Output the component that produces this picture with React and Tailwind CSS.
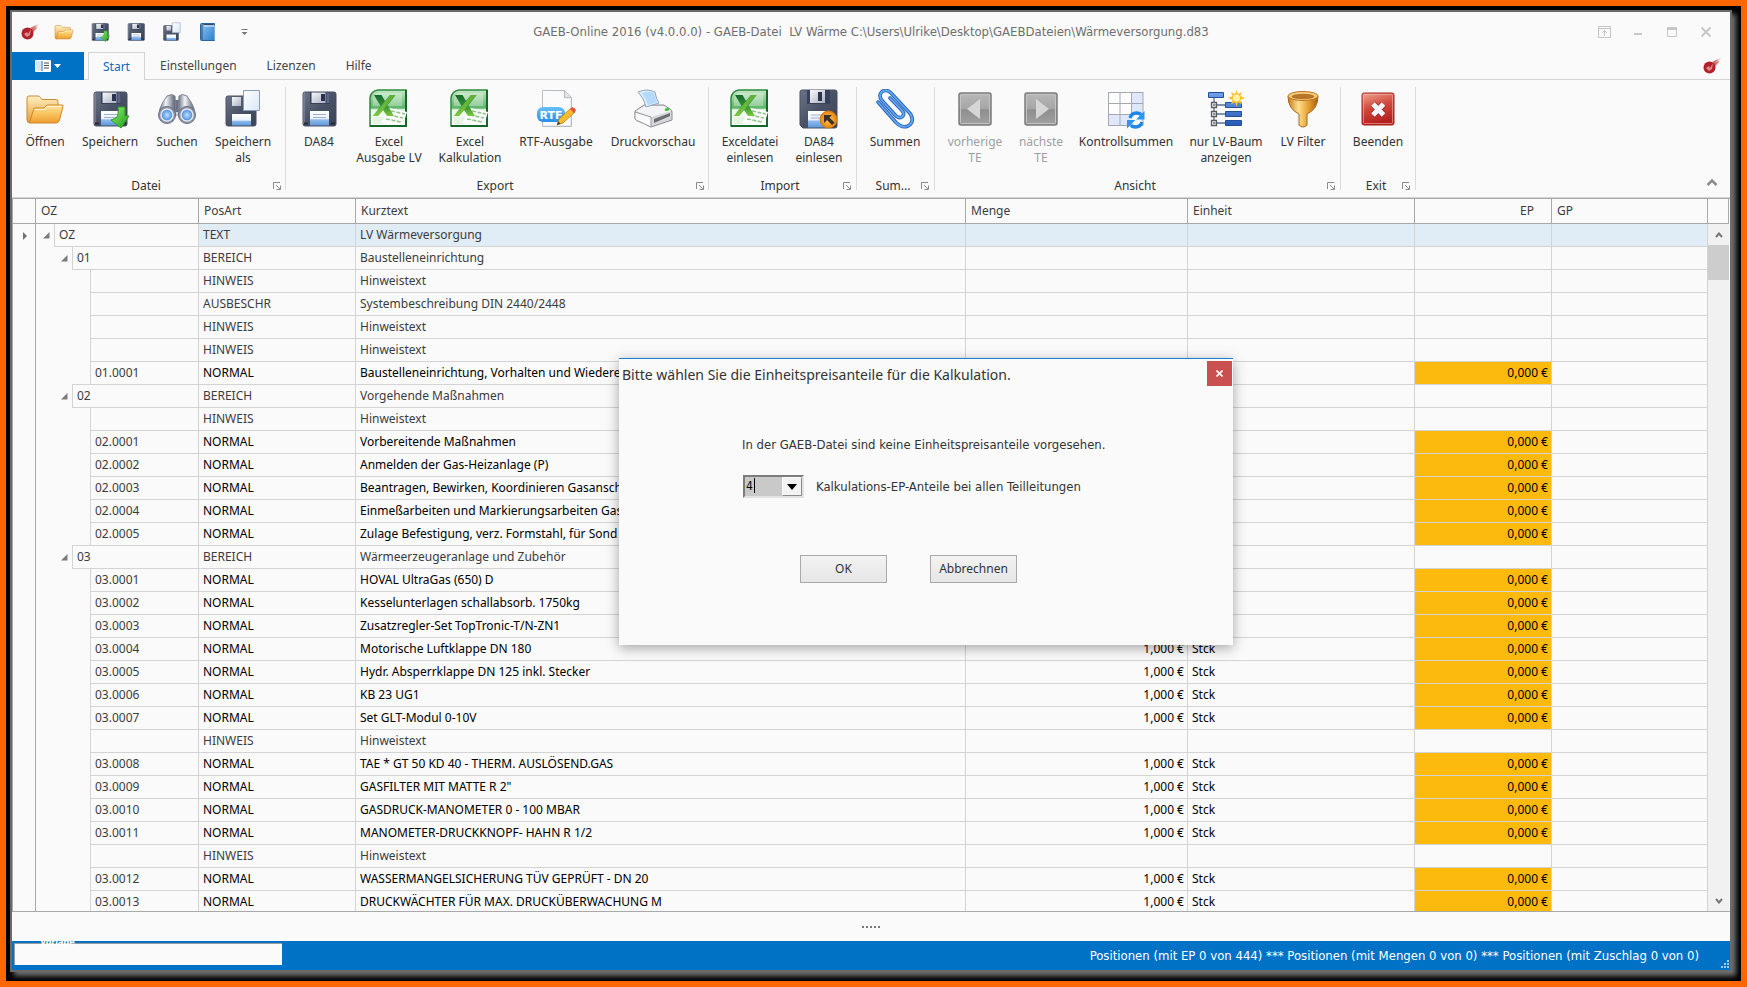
import React from "react";

const Defs = () => (
  <svg width="0" height="0" className="absolute" aria-hidden="true">
    <defs>
      <linearGradient id="gBody" x1="0" y1="0" x2="1" y2="1"><stop offset="0" stopColor="#6b7488" /><stop offset="0.5" stopColor="#4a5266" /><stop offset="1" stopColor="#3a4256" /></linearGradient>
      <linearGradient id="gLabel" x1="0" y1="0" x2="0" y2="1"><stop offset="0" stopColor="#ffffff" /><stop offset="0.55" stopColor="#e8f1fc" /><stop offset="0.6" stopColor="#8fbcec" /><stop offset="1" stopColor="#5f98dc" /></linearGradient>
      <linearGradient id="gMetal" x1="0" y1="0" x2="1" y2="1"><stop offset="0" stopColor="#f8f9fb" /><stop offset="1" stopColor="#a9b0bf" /></linearGradient>
      <linearGradient id="gFolder" x1="0" y1="0" x2="0" y2="1"><stop offset="0" stopColor="#fff0c0" /><stop offset="1" stopColor="#e39c34" /></linearGradient>
      <linearGradient id="gFolder2" x1="0" y1="0" x2="0" y2="1"><stop offset="0" stopColor="#ffe7a4" /><stop offset="0.5" stopColor="#f9c35d" /><stop offset="1" stopColor="#ee9c31" /></linearGradient>
      <linearGradient id="gGreen" x1="0" y1="0" x2="1" y2="1"><stop offset="0" stopColor="#8ff06a" /><stop offset="1" stopColor="#1f9a1c" /></linearGradient>
      <linearGradient id="gExcel" x1="0" y1="0" x2="0" y2="1"><stop offset="0" stopColor="#c4e8c4" /><stop offset="0.5" stopColor="#5cb468" /><stop offset="0.55" stopColor="#e9f6e9" /><stop offset="1" stopColor="#ffffff" /></linearGradient>
      <linearGradient id="gX" x1="0" y1="0" x2="0" y2="1"><stop offset="0" stopColor="#17692c" /><stop offset="0.5" stopColor="#2f8f35" /><stop offset="1" stopColor="#7cc63c" /></linearGradient>
      <linearGradient id="gPage" x1="0" y1="0" x2="1" y2="1"><stop offset="0" stopColor="#ffffff" /><stop offset="1" stopColor="#d9e7f7" /></linearGradient>
      <linearGradient id="gRed" x1="0" y1="0" x2="0.3" y2="1"><stop offset="0" stopColor="#f0a593" /><stop offset="0.5" stopColor="#d04a3c" /><stop offset="1" stopColor="#b3211f" /></linearGradient>
      <linearGradient id="gGray" x1="0" y1="0" x2="0" y2="1"><stop offset="0" stopColor="#b8b8b8" /><stop offset="0.5" stopColor="#a6a6a6" /><stop offset="0.52" stopColor="#8e8e8e" /><stop offset="1" stopColor="#a2a2a2" /></linearGradient>
      <linearGradient id="gBlue" x1="0" y1="0" x2="0" y2="1"><stop offset="0" stopColor="#6ea1e6" /><stop offset="1" stopColor="#2658b4" /></linearGradient>
      <linearGradient id="gGold" x1="0" y1="0" x2="1" y2="0"><stop offset="0" stopColor="#c87a1b" /><stop offset="0.35" stopColor="#ffdf8c" /><stop offset="0.7" stopColor="#e39a2c" /><stop offset="1" stopColor="#a85f12" /></linearGradient>
      <linearGradient id="gTube" x1="0" y1="0" x2="1" y2="0"><stop offset="0" stopColor="#5e6678" /><stop offset="0.4" stopColor="#f2f4f7" /><stop offset="1" stopColor="#4c5466" /></linearGradient>
      <radialGradient id="gLens"><stop offset="0" stopColor="#bfe0ff" /><stop offset="1" stopColor="#4186dc" /></radialGradient>
      <radialGradient id="gOrange"><stop offset="0" stopColor="#ffc95e" /><stop offset="1" stopColor="#e88308" /></radialGradient>
      <linearGradient id="gBook" x1="0" y1="0" x2="1" y2="1"><stop offset="0" stopColor="#8cc6f4" /><stop offset="1" stopColor="#2b7ed0" /></linearGradient>
      <linearGradient id="gRtf" x1="0" y1="0" x2="0" y2="1"><stop offset="0" stopColor="#67c1f8" /><stop offset="1" stopColor="#2a8ee6" /></linearGradient>
    </defs>
  </svg>
);

const Icon = ({ small, children }) => (
  <svg viewBox="0 0 40 40" className={small ? "size-5" : "size-10"} aria-hidden="true">{children}</svg>
);

const Disk = () => (
  <g>
    <path d="M4 5q0-2 2-2h29q2 0 2 2v30q0 2-2 2H6q-2 0-2-2z" fill="url(#gBody)" stroke="#4a5165" />
    <path d="M5 35V5q0-1 1-1" fill="none" stroke="#8b93a6" />
    <path d="M11 3h20v12H11z" fill="#39415a" />
    <path d="M12.500 3.500h14v10.500h-14z" fill="url(#gMetal)" />
    <path d="M22 5h4v7h-4z" fill="#2c3350" />
    <path d="M27.500 3.500h3v10.500h-3z" fill="#5b6787" />
    <path d="M11 22h19v14.500H11z" fill="url(#gLabel)" />
    <path d="M14 25.500h13M14 28.500h13" stroke="#9fb0c8" />
    <path d="M5 33.500h4v2H5zM32 33.500h4v2h-4z" fill="#232a3c" />
  </g>
);

const FolderIcon = (p) => (
  <Icon {...p}>
    <path d="M2 9q0-2 2-2h9q1.500 0 2.500 1.500L17 10.500h14q2 0 2 2V20L8 32l-3 2q-3 0-3-3z" fill="url(#gFolder)" stroke="#c98b35" />
    <path d="M10 19h9l3-3h15.500q1 0 .5 1.200L34.500 31q-1 3-3.500 3H5.500q-1.200 0-.6-1.500L8.500 20.500Q9 19 10 19z" fill="url(#gFolder2)" stroke="#cf862b" />
    <path d="M10.500 20.500h9l3-3h14" fill="none" stroke="#fff3cf" />
  </Icon>
);
const DiskIcon = (p) => <Icon {...p}><Disk /></Icon>;
const DiskDownIcon = (p) => (
  <Icon {...p}>
    <Disk />
    <path d="M28 18h7v9h4L31 39l-10-8 5-2q3-3 2-11z" fill="url(#gGreen)" stroke="#2ca022" />
  </Icon>
);
const DiskPageIcon = (p) => (
  <Icon {...p}>
    <path d="M3 9q0-2 2-2h26q2 0 2 2v26q0 2-2 2H5q-2 0-2-2z" fill="url(#gBody)" stroke="#4a5165" />
    <path d="M9 8h9v9H9z" fill="url(#gMetal)" />
    <path d="M9 25h19v11.500H9z" fill="url(#gLabel)" />
    <path d="M20.500 1.500h16v20h-16z" fill="url(#gPage)" stroke="#8d9cb8" />
  </Icon>
);
const DiskBackIcon = () => (
  <Icon>
    <path d="M1 3q0-2 2-2h33q2 0 2 2v34q0 2-2 2H4l-3-3z" fill="url(#gBody)" stroke="#4a5165" />
    <path d="M8 1h23v14H8z" fill="#39415a" />
    <path d="M11 1h15v13H11z" fill="url(#gMetal)" />
    <path d="M19 3h4v9h-4z" fill="#2c3350" />
    <path d="M9 22h22v16.500H9z" fill="url(#gLabel)" />
    <path d="M12 26h12M12 29h9" stroke="#9fb0c8" />
    <circle cx="29.500" cy="30.500" r="8.500" fill="url(#gOrange)" stroke="#d07a10" />
    <path d="M25 26h8l-2.500 2.500 5 5-2.500 2.500-5-5L25 34z" fill="#39312a" />
  </Icon>
);
const BookIcon = (p) => (
  <Icon {...p}>
    <path d="M5 5q0-2 2-2h26v34H7q-2 0-2-2z" fill="url(#gBook)" stroke="#2a659f" strokeWidth="2" />
    <path d="M8 4v32M11 5h20" stroke="#3d4658" strokeWidth="2" />
    <path d="M12 8h21M34 8v28" stroke="#e7f3ff" strokeWidth="2" />
  </Icon>
);
const BinocularsIcon = () => (
  <Icon>
    <path d="M15 11h10v12H15z" fill="#6b7283" />
    <path d="M10 7q5-3 8 0l1 20H2q0-8 4-14z" fill="url(#gTube)" stroke="#7d8496" />
    <path d="M30 7q-5-3-8 0l-1 20h17q0-8-4-14z" fill="url(#gTube)" stroke="#7d8496" />
    <circle cx="10" cy="26" r="8.500" fill="#8c94a5" stroke="#6a7286" />
    <circle cx="30" cy="26" r="8.500" fill="#8c94a5" stroke="#6a7286" />
    <circle cx="10" cy="26" r="6" fill="url(#gLens)" stroke="#e1e8f1" strokeWidth="1.500" />
    <circle cx="30" cy="26" r="6" fill="url(#gLens)" stroke="#e1e8f1" strokeWidth="1.500" />
  </Icon>
);
const ExcelIcon = () => (
  <Icon>
    <path d="M9 1h28v36H1V9q1-7 8-8z" fill="url(#gExcel)" stroke="#2c8a3c" strokeWidth="1.500" />
    <path d="M37 1v36H1" fill="none" stroke="#14682a" strokeWidth="2" />
    <path d="M4 10q1-6 6-6h23v13H4z" fill="#ffffff" opacity="0.3" />
    <path d="M4 28h28v7H4z" fill="#e4f4e2" />
    <path d="M21 19l17 4-4 13-22-2z" fill="#ffffff" />
    <path d="M22 22l14 3M20 26l14 3M17 30l15 3" stroke="#8fc58b" strokeWidth="1.600" strokeDasharray="4 1.500" />
    <path d="M5 6h7.500l3.500 6 5-6h5.500l-8 10.500L25 27h-7l-4-6-5 6H4l7.500-10z" fill="url(#gX)" />
    <path d="M21 6h5.500L9 27H4z" fill="#79c53f" opacity="0.75" />
  </Icon>
);
const RtfIcon = () => (
  <Icon>
    <path d="M6.500 1.500h22l7 7v29h-29z" fill="url(#gPage)" stroke="#b9bcc2" />
    <path d="M8 3h19v7h7v26H8z" fill="#fbfbfc" />
    <path d="M28.500 1.500v7h7z" fill="#e3e4e8" stroke="#b9bcc2" />
    <rect x="1" y="18" width="28" height="15" rx="6" fill="url(#gRtf)" />
    <text x="15" y="29.500" textAnchor="middle" fontSize="11" fontWeight="700" fill="#ffffff" fontFamily="DejaVu Sans, sans-serif">RTF</text>
    <path d="M21 36l2-6 12-11 4 4-12 11z" fill="#f8bb2e" stroke="#b98012" strokeWidth="0.800" />
    <path d="M34 20l2.500-2q3 1 3.500 3.500L38 24z" fill="#e4533c" />
    <path d="M21 36l1.300-3.500 2.200 2z" fill="#3c3c3c" />
  </Icon>
);
const PrinterIcon = () => (
  <Icon>
    <path d="M2 22l9-6h20l6 4q2 1 2 3v8L18 38 3 31q-1-1-1-2z" fill="#d6d7da" stroke="#8a8c91" />
    <path d="M3 22l9-5h19l7 5-20 6z" fill="#f3f4f5" />
    <path d="M2 23l16 5v10L3 31q-1-1-1-2z" fill="#fafafa" stroke="#9a9ca1" />
    <path d="M21 30l16-6v3l-16 7z" fill="#6a6c71" />
    <path d="M5 3q9-4 17 0 1 7 4 11l-13 4Q11 9 5 3z" fill="#d9ebfb" stroke="#8fa7bf" />
    <path d="M9 4q7-2 12 0 1 6 3 9l-9 3Q13 9 9 4z" fill="#b3d9fa" />
    <path d="M32 21l4-1" stroke="#37c233" strokeWidth="2.500" />
  </Icon>
);
const clipPath = "M3 13L21 33.500q6 6 12 3.500 7-4 2.500-12L16 4Q12 0 7 2.500q-4 4 0 9L21 27q4 3 6.500.5 2.500-3-.5-6L15 9";
const ClipIcon = () => (
  <Icon>
    <g fill="none" strokeLinecap="round" strokeLinejoin="round">
      <path d={clipPath} stroke="#2b62b8" strokeWidth="3.600" />
      <path d={clipPath} stroke="#5fa8f5" strokeWidth="1.800" />
    </g>
  </Icon>
);
const ArrowIcon = ({ d }) => (
  <Icon>
    <rect x="4" y="4" width="32" height="32" rx="2" fill="url(#gGray)" stroke="#7d7d7d" strokeWidth="1.500" />
    <rect x="5.500" y="5.500" width="29" height="29" rx="1" fill="none" stroke="#c4c4c4" />
    <path d={d} fill="#d6d6d6" />
  </Icon>
);
const PrevIcon = () => <ArrowIcon d="M25 10v20L12 20z" />;
const NextIcon = () => <ArrowIcon d="M15 10v20l13-10z" />;
const GridIcon = () => (
  <Icon>
    <path d="M2 3h35v34H2z" fill="#fdfdfe" />
    <path d="M26 3h11v34H2V26h24z" fill="#dfe8fa" />
    <path d="M2.500 3v34M14 3v34M25.500 3v34M37 3v34M2 3.500h35M2 14.500h35M2 25.500h35M2 36.500h35" stroke="#a5a8b0" />
    <circle cx="30" cy="31" r="5" fill="#ffffff" />
    <path d="M24 29q1.500-5 6.500-5 3 0 4.500 1.500M36 33q-1.500 5-6.500 5-3 0-4.500-1.500" fill="none" stroke="#1f86ea" strokeWidth="3.400" />
    <path d="M38.500 22v8.500H30zM21 39.500V31h8.500z" fill="#2b95f0" />
  </Icon>
);
const TreeIcon = () => (
  <Icon>
    <path d="M8 9v26M8 16h12M8 25h12M8 34h12" stroke="#5c6f92" strokeWidth="1.300" fill="none" />
    <path d="M2.500 3.500h15v5h-15zM19.500 13.500h16v5h-16zM19.500 22.500h16v5h-16zM19.500 31.500h16v5h-16z" fill="url(#gBlue)" stroke="#2450a0" />
    <path d="M5.500 13.500h5v5h-5zM5.500 22.500h5v5h-5zM5.500 31.500h5v5h-5z" fill="#f2f2f2" stroke="#565b66" strokeWidth="1.300" />
    <path d="M7 16h2.500M7 25h2.500M7 34h2.500" stroke="#333" />
    <path d="M30.500 1l1.500 4 4-2-1.500 4 4.500 2-4.500 2 1.500 4-4-1.500-1.500 4-1.500-4-4 1.500 1.500-4-4.500-2 4.500-2-1.500-4 4 2z" fill="#fcc22d" />
    <circle cx="30.500" cy="9" r="3.500" fill="#fff2a8" />
  </Icon>
);
const FunnelIcon = () => (
  <Icon>
    <path d="M5 7q0 13 11 18v11q4 4 8 0V25q11-5 11-18z" fill="url(#gGold)" stroke="#a9661a" />
    <ellipse cx="20" cy="7" rx="15" ry="4.500" fill="#f9cf7c" stroke="#b87420" />
    <ellipse cx="20" cy="7.500" rx="11.500" ry="2.800" fill="#b8762a" />
  </Icon>
);
const QuitIcon = () => (
  <Icon>
    <rect x="4" y="4" width="32" height="32" rx="2" fill="url(#gRed)" stroke="#a3221d" />
    <rect x="5.500" y="5.500" width="29" height="29" rx="1" fill="none" stroke="#f1b3a8" strokeOpacity="0.600" />
    <path d="M15 15l10.500 11M25.500 15L15 26" stroke="#8e1b18" strokeOpacity="0.500" strokeWidth="7" />
    <path d="M15 15l10.500 11M25.500 15L15 26" stroke="#f0f5fb" strokeWidth="5" />
  </Icon>
);
const CometIcon = () => (
  <svg viewBox="0 0 20 20" className="size-5" aria-hidden="true">
    <path d="M11 6l8-4-4 4 3-1-5 6z" fill="#e0a39e" />
    <path d="M10 6l6-3-3 4 4-2-5 6z" fill="#c4555a" opacity="0.700" />
    <circle cx="7.500" cy="11.500" r="6" fill="#b3202a" />
    <path d="M4 12l3-2 1 2 3-5-1 6-3 2z" fill="#e2a7a6" opacity="0.800" />
  </svg>
);

const groups = [
  { name: "Datei", pad: "pl-[3px] pr-1", items: [
    ["Öffnen", FolderIcon, "w-[60px]"],
    ["Speichern", DiskDownIcon, "w-[70px]"],
    ["Suchen", BinocularsIcon, "w-16"],
    ["Speichern\nals", DiskPageIcon, "mr-1 w-[68px]"],
  ] },
  { name: "Export", pad: "px-1", items: [
    ["DA84", DiskIcon, "w-[58px]"],
    ["Excel\nAusgabe LV", ExcelIcon, "w-[82px]"],
    ["Excel\nKalkulation", ExcelIcon, "w-20"],
    ["RTF-Ausgabe", RtfIcon, "w-[92px]"],
    ["Druckvorschau", PrinterIcon, "w-[102px]"],
  ] },
  { name: "Import", pad: "pl-1 pr-[5px]", items: [
    ["Exceldatei\neinlesen", ExcelIcon, "w-[74px]"],
    ["DA84\neinlesen", DiskBackIcon, "w-16"],
  ] },
  { name: "Sum...", pad: "pl-1 pr-[5px]", items: [["Summen", ClipIcon, "w-[68px]"]] },
  { name: "Ansicht", pad: "pl-1 pr-[5px]", items: [
    ["vorherige\nTE", PrevIcon, "w-[72px]", true],
    ["nächste\nTE", NextIcon, "w-[60px]", true],
    ["Kontrollsummen", GridIcon, "w-[110px]"],
    ["nur LV-Baum\nanzeigen", TreeIcon, "w-[90px]"],
    ["LV Filter", FunnelIcon, "w-16"],
  ] },
  { name: "Exit", pad: "pl-[5px] pr-[5px]", items: [["Beenden", QuitIcon, "w-16"]] },
];

const H = (art, text) => ({ level: 2, oz: "", art, text, info: true });
const N = (oz, text) => ({ level: 2, oz, art: "NORMAL", text });
const B = (oz, text) => ({ level: 1, oz, art: "BEREICH", text, info: true });
const rows = [
  { level: 0, oz: "OZ", art: "TEXT", text: "LV Wärmeversorgung", info: true, selected: true },
  B("01", "Baustelleneinrichtung"),
  H("HINWEIS", "Hinweistext"),
  H("AUSBESCHR", "Systembeschreibung DIN 2440/2448"),
  H("HINWEIS", "Hinweistext"),
  H("HINWEIS", "Hinweistext"),
  N("01.0001", "Baustelleneinrichtung, Vorhalten und Wiedere"),
  B("02", "Vorgehende Maßnahmen"),
  H("HINWEIS", "Hinweistext"),
  N("02.0001", "Vorbereitende Maßnahmen"),
  N("02.0002", "Anmelden der Gas-Heizanlage (P)"),
  N("02.0003", "Beantragen, Bewirken, Koordinieren Gasansch"),
  N("02.0004", "Einmeßarbeiten und Markierungsarbeiten Gas"),
  N("02.0005", "Zulage Befestigung, verz. Formstahl, für Sond"),
  B("03", "Wärmeerzeugeranlage und Zubehör"),
  N("03.0001", "HOVAL UltraGas (650) D"),
  N("03.0002", "Kesselunterlagen schallabsorb. 1750kg"),
  N("03.0003", "Zusatzregler-Set TopTronic-T/N-ZN1"),
  N("03.0004", "Motorische Luftklappe DN 180"),
  N("03.0005", "Hydr. Absperrklappe DN 125 inkl. Stecker"),
  N("03.0006", "KB 23 UG1"),
  N("03.0007", "Set GLT-Modul 0-10V"),
  H("HINWEIS", "Hinweistext"),
  N("03.0008", "TAE * GT 50 KD 40 - THERM. AUSLÖSEND.GAS"),
  N("03.0009", "GASFILTER MIT MATTE R 2\""),
  N("03.0010", "GASDRUCK-MANOMETER 0 - 100 MBAR"),
  N("03.0011", "MANOMETER-DRUCKKNOPF- HAHN R 1/2"),
  H("HINWEIS", "Hinweistext"),
  N("03.0012", "WASSERMANGELSICHERUNG TÜV GEPRÜFT - DN 20"),
  N("03.0013", "DRUCKWÄCHTER FÜR MAX. DRUCKÜBERWACHUNG M"),
];

const spacer = ["w-0", "w-[18px]", "w-9"];

function TitleBar() {
  const win = "flex h-8 w-[34px] items-center justify-center";
  return (
    <header className="grid h-10 grid-cols-[1fr_auto_1fr] items-center">
      <div className="flex items-center pl-2">
        <CometIcon />
        <div className="flex items-center gap-4 pl-[14px]">
          <button aria-label="Öffnen"><FolderIcon small /></button>
          <button aria-label="Speichern"><DiskDownIcon small /></button>
          <button aria-label="DA84"><DiskIcon small /></button>
          <button aria-label="Speichern als"><DiskPageIcon small /></button>
          <button aria-label="Handbuch"><BookIcon small /></button>
          <button aria-label="Anpassen">
            <svg viewBox="0 0 20 20" className="size-5" aria-hidden="true"><path d="M7.500 7.500h6" stroke="#777" /><path d="M7.500 10h6l-3 3z" fill="#777" /></svg>
          </button>
        </div>
      </div>
      <h1 className="whitespace-pre text-[13px] text-[#6e6e6e]">GAEB-Online 2016 (v4.0.0.0) - GAEB-Datei  LV Wärme C:\Users\Ulrike\Desktop\GAEBDateien\Wärmeversorgung.d83</h1>
      <div className="flex justify-end pr-[7px] text-[#c6c6c6]">
        <button className={win} aria-label="Menüband-Anzeigeoptionen"><svg width="13" height="12" viewBox="0 0 13 12" fill="none" stroke="currentColor"><path d="M.5.500h12v11H.500zM0 2.500h13M6.500 10V4.500M4 7l2.500-2.500L9 7" /></svg></button>
        <button className={win} aria-label="Minimieren"><svg width="10" height="10" viewBox="0 0 10 10"><path d="M1 6h8v2H1z" fill="currentColor" /></svg></button>
        <button className={win} aria-label="Maximieren"><svg width="10" height="10" viewBox="0 0 10 10"><path d="M0 0h10v3H0z" fill="currentColor" /><path d="M.5.500h9v9h-9z" fill="none" stroke="currentColor" /></svg></button>
        <button className={win} aria-label="Schließen"><svg width="10" height="10" viewBox="0 0 10 10"><path d="M.5.500l9 9M9.500.500l-9 9" stroke="currentColor" strokeWidth="2" /></svg></button>
      </div>
    </header>
  );
}

function Tabs() {
  const tab = "h-7 border-b border-[#d4d4d4] px-[15px]";
  return (
    <nav className="flex h-7 font-['Noto_Sans',sans-serif] text-[12px] text-[#444]">
      <button className="flex w-[72px] items-center justify-center gap-[3px] bg-[#0072c6]" aria-label="Datei">
        <svg width="16" height="12" viewBox="0 0 16 12" aria-hidden="true"><rect width="16" height="12" rx="1" fill="#fff" /><path d="M7 1v10" stroke="#0072c6" /><path d="M9 3h5M9 5.500h5M9 8h5" stroke="#4a4a4a" /><path d="M1 1h5v10H1z" fill="#dbe6f0" /></svg>
        <svg width="7" height="5" viewBox="0 0 7 5" aria-hidden="true"><path d="M0 0h7L3.500 4z" fill="#fff" /></svg>
      </button>
      <span className="w-1 border-b border-[#d4d4d4]" />
      <button className="h-7 border-x border-t border-[#d4d4d4] px-[14px] text-[#0b6bc7]">Start</button>
      <button className={tab}>Einstellungen</button>
      <button className={tab}>Lizenzen</button>
      <button className={tab}>Hilfe</button>
      <span className="flex flex-1 items-center justify-end border-b border-[#d4d4d4] pr-2"><CometIcon /></span>
    </nav>
  );
}

function Ribbon() {
  return (
    <section className="flex h-[118px] border-b border-[#d4d4d4] font-['Noto_Sans',sans-serif] text-[12px] leading-4 text-[#333]">
      {groups.map((g) => (
        <div key={g.name} className={"my-[7px] flex flex-col border-r border-[#dcdcdc] " + g.pad}>
          <div className="flex flex-1 items-start pt-[2px]">
            {g.items.map(([label, Pic, w, off]) => (
              <button key={label} disabled={off} className={"flex flex-col items-center gap-[5px] whitespace-pre " + w + (off ? " text-[#a0a0a0]" : "")}>
                <Pic />
                <span>{label}</span>
              </button>
            ))}
          </div>
          <div className="flex items-center leading-2">
            <span className="flex-1 pl-1 text-center">{g.name}</span>
            <button aria-label={g.name + " Optionen"}><svg width="8" height="8" viewBox="0 0 8 8" fill="none" stroke="#8a8a8a"><path d="M.5 7V.500H7M3 3l4 4M7.500 3.500v4h-4" /></svg></button>
          </div>
        </div>
      ))}
      <div className="flex flex-1 items-end justify-end pb-2 pr-3">
        <button aria-label="Menüband reduzieren"><svg width="12" height="12" viewBox="0 0 12 12"><path d="M1.500 8L6 3.500 10.500 8" fill="none" stroke="#8c8c8c" strokeWidth="2.500" /></svg></button>
      </div>
    </section>
  );
}

function Row({ row, next }) {
  const { level, oz, art, text, info, selected } = row;
  const priced = !info;
  const cell = "h-[23px] border-b border-r border-[#d4d4d4] px-1 " + (selected ? "bg-[#e0ecf6]" : "");
  const money = "h-[23px] border-b border-r border-[#d4d4d4] pr-[3px] text-right " + (selected ? "bg-[#e0ecf6]" : "");
  return (
    <tr className={info ? "text-[#3c3c3c]" : "text-black"}>
      <td className="h-[23px] border-r border-[#a9a9a9] pl-[9px]">
        {selected && <svg width="5" height="8" viewBox="0 0 5 8"><path d="M1 0l4 4-4 4z" fill="#707070" /></svg>}
      </td>
      <td className="h-[23px] border-r border-[#d4d4d4] text-[#3c3c3c]">
        <div className="flex h-[23px]">
          <span className={spacer[level]} />
          <span className={"flex w-[18px] items-center pl-[7px] " + (next && next.level < level ? "border-b border-[#d4d4d4]" : "")}>
            {level < 2 && <svg width="7" height="7" viewBox="0 0 7 7"><path d="M6.500 0v6.500H0z" fill="#7a7a7a" /></svg>}
          </span>
          <span className="flex-1 border-b border-l border-[#d4d4d4] px-1 leading-[22px]">{oz}</span>
        </div>
      </td>
      <td className={cell}>{art}</td>
      <td className={cell + " truncate"}>{text}</td>
      <td className={money}>{priced && "1,000 €"}</td>
      <td className={cell}>{priced && "Stck"}</td>
      <td className={money + (priced ? " bg-[#fbba0d]" : "")}>{priced && "0,000 €"}</td>
      <td className={cell} />
    </tr>
  );
}

function Grid() {
  const th = "h-[25px] border-b border-r border-[#a9a9a9] px-[5px] text-left font-normal";
  return (
    <main className="flex min-h-0 flex-1 overflow-hidden border-y border-l border-[#a9a9a9] font-['Noto_Sans',sans-serif] text-[12px]">
      <div className="min-w-0 flex-1 overflow-hidden">
        <table className="w-full table-fixed border-separate border-spacing-0 leading-4">
          <colgroup>
            <col className="w-[23px]" /><col className="w-[163px]" /><col className="w-[157px]" /><col />
            <col className="w-[222px]" /><col className="w-[227px]" /><col className="w-[137px]" /><col className="w-[156px]" />
          </colgroup>
          <thead className="text-[#3c3c3c]">
            <tr>
              <th className={th} aria-label="Zeile" />
              <th className={th}>OZ</th>
              <th className={th}>PosArt</th>
              <th className={th}>Kurztext</th>
              <th className={th}>Menge</th>
              <th className={th}>Einheit</th>
              <th className="h-[25px] border-b border-r border-[#a9a9a9] pr-[17px] text-right font-normal">EP</th>
              <th className={th}>GP</th>
            </tr>
          </thead>
          <tbody>{rows.map((r, i) => <Row key={i} row={r} next={rows[i + 1]} />)}</tbody>
        </table>
      </div>
      <div className="mr-[1px] flex w-[21px] flex-col bg-[#f1f1f1]">
        <div className="h-[25px] border-b border-r border-[#a9a9a9] bg-[#fafafa]" />
        <button className="flex h-[21px] items-center justify-center" aria-label="Nach oben"><svg width="8" height="6" viewBox="0 0 8 6"><path d="M1 5l3-3.500L7 5" fill="none" stroke="#777" strokeWidth="2" /></svg></button>
        <div className="h-[35px] bg-[#cdcdcd]" />
        <div className="flex-1" />
        <button className="flex h-[21px] items-center justify-center" aria-label="Nach unten"><svg width="8" height="6" viewBox="0 0 8 6"><path d="M1 1l3 3.500L7 1" fill="none" stroke="#777" strokeWidth="2" /></svg></button>
      </div>
    </main>
  );
}

function StatusBar() {
  return (
    <footer className="relative flex h-[29px] items-center justify-between bg-[#0072c6] pl-[2px] text-[13px] text-white">
      <input aria-label="Vorlage" className="mb-[3px] h-[22px] w-[268px] border-l border-t border-[#9a9a9a] bg-[#fafafa] px-1" />
      <span aria-hidden="true" className="absolute -top-1 left-7 text-[9px] font-bold leading-[10px] text-white">Vorlage</span>
      <p className="pr-[31px]">Positionen (mit EP 0 von 444) *** Positionen (mit Mengen 0 von 0) *** Positionen (mit Zuschlag 0 von 0)</p>
      <svg width="8" height="8" viewBox="0 0 8 8" className="absolute bottom-[2px] right-[1px]" aria-hidden="true"><path d="M6 0h2v2H6zM3 3h2v2H3zM6 3h2v2H6zM0 6h2v2H0zM3 6h2v2H3zM6 6h2v2H6z" fill="#a9c9e6" /></svg>
    </footer>
  );
}

function CalculationDialog() {
  const button = "h-7 w-[87px] border border-[#a9a9a9] bg-gradient-to-b from-[#f3f3f3] to-[#e6e6e6] font-['Noto_Sans',sans-serif] text-[12px]";
  return (
    <section role="dialog" aria-labelledby="dlg-title" className="absolute left-[619px] top-[358px] flex h-[287px] w-[614px] flex-col border-t border-[#1a7fd0] bg-[#fafafa] text-[#333] shadow-[0_3px_12px_rgba(0,0,0,0.35)]">
      <header className="flex items-start justify-between pr-px pt-[2px]">
        <h2 id="dlg-title" className="pl-[3px] pt-1 font-['Noto_Sans',sans-serif] text-[14px] leading-5">Bitte wählen Sie die Einheitspreisanteile für die Kalkulation.</h2>
        <button aria-label="Schließen" className="flex h-[25px] w-[25px] items-center justify-center bg-[#c9504f]">
          <svg width="7" height="7" viewBox="0 0 7 7"><path d="M.5.500l6 6M6.500.500l-6 6" stroke="#fff" strokeWidth="1.600" /></svg>
        </button>
      </header>
      <p className="mt-[49px] pl-[123px] text-[13px] leading-5">In der GAEB-Datei sind keine Einheitspreisanteile vorgesehen.</p>
      <div className="mt-5 flex items-center pl-[124px]">
        <div className="flex h-[23px] w-[61px] border-2 border-[#7c7c7c] border-b-[#e2e2e2] border-r-[#e2e2e2] bg-[#c9c9c9]">
          <input id="ep-count" role="combobox" aria-expanded="false" aria-controls="ep-list" defaultValue="4" className="my-[1px] h-[15px] w-[10px] border-r border-black bg-transparent pl-[1px] text-[12px] text-black outline-none" />
          <span className="flex-1" />
          <button aria-label="Auswahl öffnen" className="flex w-5 items-center justify-center border border-[#fafafa] border-b-[#8a8a8a] border-r-[#8a8a8a] bg-[#f3f3f3]">
            <svg width="10" height="6" viewBox="0 0 10 6"><path d="M0 0h10L5 6z" fill="#000" /></svg>
          </button>
        </div>
        <label htmlFor="ep-count" className="pl-3 text-[13px]">Kalkulations-EP-Anteile bei allen Teilleitungen</label>
      </div>
      <div className="mt-[57px] flex gap-[43px] pl-[181px]">
        <button className={button}>OK</button>
        <button className={button}>Abbrechnen</button>
      </div>
    </section>
  );
}

export default function App() {
  return (
    <div className="relative h-screen bg-[#ff6600] p-[6px] font-['DejaVu_Sans_Condensed','DejaVu_Sans',sans-serif]">
      <Defs />
      <div className="h-full overflow-hidden bg-black pb-[9px] pl-1 pr-[9px] pt-1">
        <div className="flex h-full flex-col border-2 border-[#6a6a6a] bg-[#fafafa] shadow-[4px_4px_5px_0_#6f6f6f]">
          <TitleBar />
          <Tabs />
          <Ribbon />
          <Grid />
          <div className="flex h-[29px] items-center justify-center gap-[2px]">
            {[0, 1, 2, 3, 4].map((i) => <i key={i} className="size-[2px] bg-[#777]" />)}
          </div>
          <StatusBar />
        </div>
      </div>
      <CalculationDialog />
    </div>
  );
}
